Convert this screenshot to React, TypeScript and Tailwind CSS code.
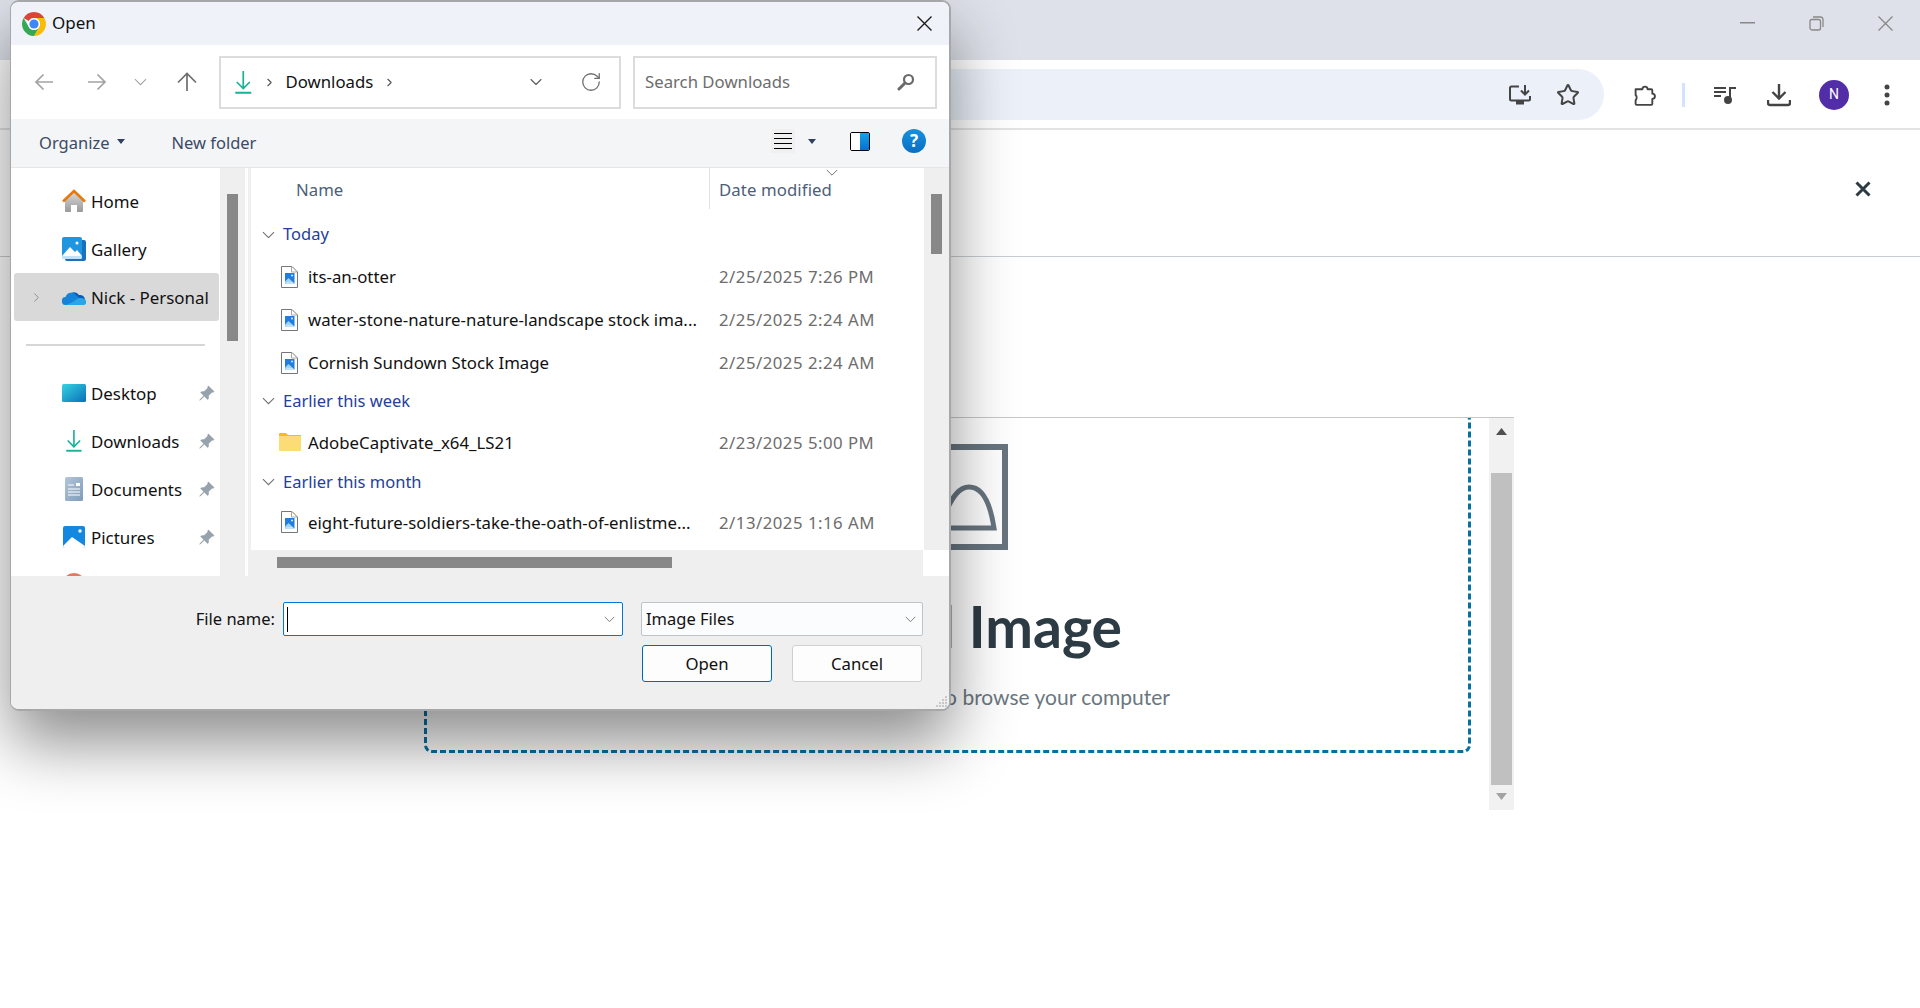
import React from "react";
import { BsPinAngleFill } from "react-icons/bs";
import { RotateCw, Star, ChevronDown, ChevronRight } from "lucide-react";

const ChromeLogo = () => (
  <svg width="24" height="24" viewBox="0 0 24 24">
    <path fill="#db4437" d="M12 0A12 12 0 0 1 22.39 6H12A6 6 0 0 0 6.8 9L1.61 6A12 12 0 0 1 12 0Z" />
    <path fill="#fbbc04" d="M22.39 6A12 12 0 0 1 12 24L17.2 15A6 6 0 0 0 12 6H22.39Z" />
    <path fill="#34a853" d="M1.61 6L6.8 15A6 6 0 0 0 17.2 15L12 24A12 12 0 0 1 1.61 6Z" />
    <circle cx="12" cy="12" r="6" fill="#fff" />
    <circle cx="12" cy="12" r="4.6" fill="#4285f4" />
  </svg>
);

const Arrow = ({ dir, color }: { dir: "l" | "r" | "u"; color: string }) => (
  <svg width="20" height="20" viewBox="0 0 20 20" fill="none" stroke={color} strokeWidth="1.7">
    {dir === "l" && <path d="M19 10H2M9.5 2.5L2 10l7.500 7.500" />}
    {dir === "r" && <path d="M1 10h17M10.500 2.500L18 10l-7.500 7.500" />}
    {dir === "u" && <path d="M10 19V2M1 10.500L10 1.500l9 9" />}
  </svg>
);

const DownloadGreen = ({ h = 23 }: { h?: number }) => (
  <svg width={h * 0.72} height={h} viewBox="0 0 16 23" fill="none" stroke="#17b297" strokeWidth="1.7">
    <path d="M8 0v17M1.500 11L8 17.500 14.500 11" />
    <path d="M0 21.700h16" strokeWidth="2" />
  </svg>
);

const Home = () => (
  <svg width="24" height="24" viewBox="0 0 24 24">
    <defs>
      <linearGradient id="hg" x1="0" y1="0" x2="0" y2="1">
        <stop offset="0" stopColor="#d8d8d8" />
        <stop offset="1" stopColor="#9a9a9a" />
      </linearGradient>
    </defs>
    <path fill="url(#hg)" d="M3 11l9-8 9 8v11a1 1 0 0 1-1 1h-5v-7H9v7H4a1 1 0 0 1-1-1z" />
    <path fill="none" stroke="#e8780c" strokeWidth="2.600" d="M1 12.500L12 2l11 10.500" />
  </svg>
);

const Gallery = () => (
  <svg width="24" height="24" viewBox="0 0 24 24">
    <rect x="3" y="3" width="21" height="21" rx="2" fill="#1a6fc0" />
    <rect x="0" y="0" width="20" height="22" rx="2" fill="#2196e0" />
    <path fill="#fff" d="M0 19l8-9 5 5 2-2 5 6v1a2 2 0 0 1-2 2H2a2 2 0 0 1-2-2z" />
    <path fill="#bfe3fa" d="M0 19h20v1a2 2 0 0 1-2 2H2a2 2 0 0 1-2-2z" />
    <circle cx="15" cy="6" r="1.500" fill="#fff" />
  </svg>
);

const Cloud = () => (
  <svg width="24" height="16" viewBox="0 0 24 16">
    <path fill="#0b5cb5" d="M6 9a6 6 0 0 1 11-3 5 5 0 0 1 6 5z" />
    <path fill="#1583d8" d="M4 16a4 4 0 0 1-.5-8A6 6 0 0 1 14 6l5 5-6 5z" />
    <path fill="#2aa5ea" d="M4 16h17a3 3 0 0 0 2-5.500c-2-2-6-2-8-.5l-4 3z" />
  </svg>
);

const Desktop = () => (
  <svg width="24" height="18" viewBox="0 0 24 18">
    <defs>
      <linearGradient id="dg" x1="0" y1="0" x2="1" y2="1">
        <stop offset="0" stopColor="#35d4e0" />
        <stop offset="1" stopColor="#0a6fb8" />
      </linearGradient>
    </defs>
    <rect width="24" height="18" rx="1.500" fill="url(#dg)" />
  </svg>
);

const Documents = () => (
  <svg width="18" height="24" viewBox="0 0 18 24">
    <defs>
      <linearGradient id="docg" x1="0" y1="0" x2="1" y2="1">
        <stop offset="0" stopColor="#b3c6da" />
        <stop offset="1" stopColor="#7f9cb9" />
      </linearGradient>
    </defs>
    <rect width="18" height="24" rx="1.500" fill="url(#docg)" />
    <path d="M3 8h6M3 12h12M3 15h12M3 18h12" stroke="#fff" strokeWidth="1" />
    <rect x="11" y="6" width="4" height="3" fill="#fff" />
  </svg>
);

const Pictures = () => (
  <svg width="22" height="22" viewBox="0 0 22 22">
    <rect width="22" height="22" rx="2" fill="#1488e0" />
    <path fill="#fff" d="M0 20l9-9 13 9v0a2 2 0 0 1-2 2H2a2 2 0 0 1-2-2z" />
    <circle cx="17" cy="5" r="1.700" fill="#fff" />
  </svg>
);

const Music = () => (
  <svg width="24" height="24" viewBox="0 0 24 24">
    <circle cx="12" cy="12" r="12" fill="#e8765a" />
  </svg>
);

const FileIcon = () => (
  <svg width="17" height="22" viewBox="0 0 17 22" fill="none">
    <path d="M.5.500h10.500l5.500 5.500V21.500H.5z" fill="#fff" stroke="#73777c" strokeWidth="1" />
    <path d="M10.500.500v5.500h6" stroke="#a5a8ab" strokeWidth="1" />
    <rect x="4" y="7" width="9.500" height="10.500" fill="#1f7de0" />
    <path d="M4 17.500v-2l3.500-3.500 6 5.500z" fill="#9fd4f8" />
    <path d="M4 17.500l2-1h5.500l2 1z" fill="#e8f5fe" />
    <circle cx="11" cy="9.500" r="1" fill="#dff1fd" />
  </svg>
);

const FolderIcon = () => (
  <svg width="22" height="18" viewBox="0 0 22 18">
    <path d="M0 1a1 1 0 0 1 1-1h6l2 2h13v3H0z" fill="#f6b72b" />
    <path d="M0 3h22v14a1 1 0 0 1-1 1H1a1 1 0 0 1-1-1z" fill="#fbdc75" />
  </svg>
);

const Chev = ({ w = 14, color = "#6a6a6a" }: { w?: number; color?: string }) => (
  <svg width={w} height={w * 0.6} viewBox="0 0 14 8" fill="none" stroke={color} strokeWidth="1.100">
    <path d="M1 1l6 6 6-6" />
  </svg>
);

const Caret = ({ color = "#2f4060" }: { color?: string }) => (
  <svg width="8" height="5" viewBox="0 0 8 5" className="shrink-0">
    <path d="M0 0h8L4 5z" fill={color} />
  </svg>
);

function NavItem({ icon, label, pin, selected, arrow }: { icon: React.ReactNode; label?: string; pin?: boolean; selected?: boolean; arrow?: boolean }) {
  return (
    <div className={`h-[48px] ml-[3px] mr-[1px] flex items-center rounded-[3px] relative ${selected ? "bg-[#d9d9d9]" : ""}`}>
      <div className="w-[48px] flex justify-center items-center shrink-0">
        {arrow && <ChevronRight size={15} color="#8a8a8a" strokeWidth={1.500} className="ml-[-4px]" />}
      </div>
      <div className="w-[24px] h-[24px] flex items-center justify-center shrink-0">{icon}</div>
      {label && <span className="ml-[5px] pt-[1px] text-[16.900px] text-[#111]">{label}</span>}
      {pin && <BsPinAngleFill size={17} color="#98a2ab" className="absolute right-[4px]" />}
    </div>
  );
}

const Group = ({ label, h }: { label: string; h: string }) => (
  <div className={`flex items-center ${h}`}>
    <div className="w-[32px] flex justify-end pr-[8px]">
      <Chev w={13} color="#6f6f6f" />
    </div>
    <span className="text-[16.500px] text-[#24409c]">{label}</span>
  </div>
);

const Row = ({ name, date, h, folder }: { name: string; date: string; h: string; folder?: boolean }) => (
  <div className={`flex items-center ${h}`}>
    <div className={`w-[57px] flex justify-end ${folder ? "pr-[7px]" : "pr-[10px]"}`}>{folder ? <FolderIcon /> : <FileIcon />}</div>
    <span className="w-[411px] pt-[1px] text-[16.800px] tracking-[0.02px] text-[#111] whitespace-nowrap">{name}</span>
    <span className="pt-[1px] text-[16.750px] tracking-[0.5px] text-[#6d6d6d] whitespace-nowrap">{date}</span>
  </div>
);

function FileDialog() {
  return (
    <div className="absolute left-[10px] top-0 w-[941px] h-[711px] border-t-2 border-b-2 border-r-2 border-l border-[#a6a7a9] rounded-[9px] bg-white overflow-hidden flex flex-col shadow-[0_32px_64px_rgba(0,0,0,0.45)] font-['Noto_Sans',sans-serif] z-10">
      {/* title */}
      <div className="h-[43px] bg-[#eff3f9] flex items-center pl-[11px] pr-[17px] shrink-0">
        <ChromeLogo />
        <span className="ml-[6px] mb-[1px] text-[17px] text-[#111]">Open</span>
        <svg className="ml-auto" width="15" height="15" viewBox="0 0 15 15" stroke="#1c1c1c" strokeWidth="1.400">
          <path d="M.5.500l14 14M14.500.500l-14 14" />
        </svg>
      </div>
      {/* nav bar */}
      <div className="h-[74px] flex items-center shrink-0 pl-[23px] pr-[12px]">
        <Arrow dir="l" color="#a2a2a2" />
        <div className="ml-[33px]"><Arrow dir="r" color="#a2a2a2" /></div>
        <div className="ml-[27px]"><Chev w={13} color="#a2a2a2" /></div>
        <div className="ml-[30px]"><Arrow dir="u" color="#6e6e6e" /></div>
        <div className="ml-[22px] w-[402px] h-[53px] border-2 border-[#dcdcdc] flex items-center pl-[14px] pr-[17px]">
          <DownloadGreen />
          <ChevronRight size={13} color="#555" strokeWidth={2} className="ml-[11px]" />
          <span className="ml-[10px] text-[16.750px] text-[#111]">Downloads</span>
          <ChevronRight size={13} color="#555" strokeWidth={2} className="ml-[10px]" />
          <ChevronDown size={20} color="#5c5c5c" strokeWidth={1.300} className="ml-[130px]" />
          <RotateCw size={22} color="#6e6e6e" strokeWidth={1.400} className="ml-auto" />
        </div>
        <div className="ml-[12px] w-[304px] h-[53px] border-2 border-[#dcdcdc] flex items-center pl-[10px] pr-[20px]">
          <span className="text-[16.750px] text-[#6d6d6d]">Search Downloads</span>
          <svg className="ml-auto" width="18" height="18" viewBox="0 0 18 18" fill="none" stroke="#6a6a6a">
            <circle cx="11.500" cy="6.500" r="4.500" strokeWidth="2.200" />
            <path d="M8 10l-6 6" strokeWidth="3" strokeLinecap="round" />
          </svg>
        </div>
      </div>
      {/* toolbar */}
      <div className="h-[49px] bg-[#f4f5f6] border-b border-[#e6e6e6] flex items-center shrink-0 pl-[28px] pr-[23px]">
        <span className="pt-[1px] text-[16.500px] text-[#3b4a66]">Organize</span>
        <div className="ml-[8px] mb-[4px]"><Caret /></div>
        <span className="ml-[46px] pt-[1px] text-[16.500px] text-[#3b4a66]">New folder</span>
        <div className="ml-auto w-[24px] h-[24px] bg-[#f0f0f0] flex flex-col justify-center gap-[4px] px-[3px] mb-[4px]">
          <div className="h-px bg-black" /><div className="h-px bg-black" /><div className="h-px bg-black" /><div className="h-px bg-black" />
        </div>
        <div className="ml-[13px] mb-[4px]"><Caret /></div>
        <div className="ml-[34px] w-[20px] h-[19px] border-[1.500px] border-black rounded-[2px] flex mb-[4px] overflow-hidden">
          <div className="w-1/2 bg-white" />
          <div className="w-1/2 bg-gradient-to-b from-[#18a2e8] to-[#0b6fd0]" />
        </div>
        <div className="ml-[32px] w-[24px] h-[24px] rounded-full bg-gradient-to-b from-[#1890de] to-[#0a6fc2] text-white font-bold text-[17px] leading-[24px] text-center mb-[4px]">?</div>
      </div>
      {/* body */}
      <div className="h-[408px] flex shrink-0">
        <div className="w-[209px] overflow-hidden pt-[9px] shrink-0">
          <NavItem icon={<Home />} label="Home" />
          <NavItem icon={<Gallery />} label="Gallery" />
          <NavItem icon={<Cloud />} label="Nick - Personal" selected arrow />
          <div className="h-[48px] flex items-center px-[15px]"><div className="h-[2px] w-full bg-[#d6d6d6]" /></div>
          <NavItem icon={<Desktop />} label="Desktop" pin />
          <NavItem icon={<DownloadGreen h={22} />} label="Downloads" pin />
          <NavItem icon={<Documents />} label="Documents" pin />
          <NavItem icon={<Pictures />} label="Pictures" pin />
          <NavItem icon={<Music />} />
        </div>
        <div className="w-[25px] bg-[#efefef] pt-[26px] pl-[7px] shrink-0">
          <div className="w-[11px] h-[147px] bg-[#888]" />
        </div>
        <div className="w-[3px] shrink-0" />
        <div className="w-[3px] bg-[#efefef] shrink-0" />
        <div className="flex-1 flex flex-col min-w-0">
          <div className="h-[382px] flex shrink-0">
            <div className="flex-1 relative overflow-hidden">
              <div className="h-[46px] relative">
                <div className="h-[41px] flex items-center pl-[45px] pt-[2px] w-[459px] border-r border-[#e3e3e3]">
                  <span className="text-[16.750px] text-[#4c607a]">Name</span>
                </div>
                <span className="absolute left-[468px] top-[9px] text-[16.750px] tracking-[0.1px] text-[#4c607a]">Date modified</span>
                <div className="absolute left-[575px] top-[1px]"><Chev w={12} color="#6f6f6f" /></div>
              </div>
              <Group label="Today" h="h-[41px]" />
              <Row name="its-an-otter" date="2/25/2025 7:26 PM" h="h-[43px]" />
              <Row name="water-stone-nature-nature-landscape stock ima..." date="2/25/2025 2:24 AM" h="h-[43px]" />
              <Row name="Cornish Sundown Stock Image" date="2/25/2025 2:24 AM" h="h-[43px]" />
              <Group label="Earlier this week" h="h-[34px]" />
              <Row name="AdobeCaptivate_x64_LS21" date="2/23/2025 5:00 PM" h="h-[48px]" folder />
              <Group label="Earlier this month" h="h-[32px]" />
              <Row name="eight-future-soldiers-take-the-oath-of-enlistme..." date="2/13/2025 1:16 AM" h="h-[48px]" />
            </div>
            <div className="w-[25px] bg-[#efefef] pt-[26px] pl-[7px] shrink-0">
              <div className="w-[11px] h-[60px] bg-[#888]" />
            </div>
          </div>
          <div className="h-[26px] flex shrink-0">
            <div className="flex-1 bg-[#efefef] pt-[7px] pl-[26px]">
              <div className="w-[395px] h-[11px] bg-[#888]" />
            </div>
            <div className="w-[26px] bg-white" />
          </div>
        </div>
      </div>
      {/* footer */}
      <div className="flex-1 bg-[#efefef] relative flex flex-col items-end pr-[26px] pt-[26px]">
        <div className="flex items-center h-[34px]">
          <span className="pt-[1px] text-[16.500px] text-[#111] mr-[8px]">File name:</span>
          <div className="w-[340px] h-[34px] bg-white border border-[#0078d4] rounded-[2px] flex items-center pl-[3px] pr-[7px]">
            <div className="w-px h-[25px] bg-black" />
            <div className="ml-auto"><Chev w={11} /></div>
          </div>
          <div className="ml-[18px] w-[282px] h-[34px] bg-[#fbfcfe] border border-[#bfc4c9] rounded-[2px] flex items-center pl-[4px] pr-[6px]">
            <span className="pt-[1px] text-[16.500px] text-[#111]">Image Files</span>
            <div className="ml-auto"><Chev w={11} /></div>
          </div>
        </div>
        <div className="flex gap-[20px] mt-[9px] mr-[1px]">
          <div className="w-[130px] h-[37px] pt-[1px] bg-[#fdfdfd] border border-[#0067c0] rounded-[3px] flex items-center justify-center text-[16.750px] text-[#111]">Open</div>
          <div className="w-[130px] h-[37px] pt-[1px] bg-[#fdfdfd] border border-[#d0d0d0] rounded-[3px] flex items-center justify-center text-[16.750px] text-[#111]">Cancel</div>
        </div>
        <svg className="absolute right-[1px] bottom-[1px]" width="12" height="12" viewBox="0 0 12 12" fill="#c8c8c8">
          <rect x="9" y="0" width="2" height="2" /><rect x="6" y="3" width="2" height="2" /><rect x="9" y="3" width="2" height="2" />
          <rect x="3" y="6" width="2" height="2" /><rect x="6" y="6" width="2" height="2" /><rect x="9" y="6" width="2" height="2" />
          <rect x="0" y="9" width="2" height="2" /><rect x="3" y="9" width="2" height="2" /><rect x="6" y="9" width="2" height="2" /><rect x="9" y="9" width="2" height="2" />
        </svg>
      </div>
    </div>
  );
}

function BrowserChrome() {
  return (
    <>
      <div className="h-[60px] bg-[#dee1e9] flex items-center justify-end pr-[27px] pb-[14px]">
        <svg width="15" height="2" viewBox="0 0 15 2"><rect width="15" height="1.500" fill="#888" /></svg>
        <svg className="ml-[54px]" width="15" height="15" viewBox="0 0 15 15" fill="none" stroke="#888" strokeWidth="1.300">
          <rect x="1" y="3.500" width="10.500" height="10.500" rx="2" />
          <path d="M4 1h7.500A2.500 2.500 0 0 1 14 3.500V11" />
        </svg>
        <svg className="ml-[54px]" width="15" height="15" viewBox="0 0 15 15" stroke="#888" strokeWidth="1.300">
          <path d="M.5.500l14 14M14.500.500l-14 14" />
        </svg>
      </div>
      <div className="h-[70px] bg-white border-b-2 border-[#e3e3e3] rounded-tl-[10px] rounded-tr-[10px] flex items-center pt-[1px]">
        <div className="flex-1 h-[51px] bg-[#ebf0f9] rounded-full flex items-center justify-end pr-[24px] ml-[40px]">
          <svg width="24" height="24" viewBox="0 0 24 24" fill="none" stroke="#444" strokeWidth="2">
            <path d="M11 3.500H3.500a1.500 1.500 0 0 0-1.500 1.500v11a1.500 1.500 0 0 0 1.500 1.500h17a1.500 1.500 0 0 0 1.500-1.500v-3" />
            <path d="M17 2v9M13 7.500l4 4 4-4" />
            <rect x="8" y="18" width="8" height="3.500" fill="#444" stroke="none" />
          </svg>
          <Star size={24} color="#444" strokeWidth={2} className="ml-[24px]" />
        </div>
        <svg className="ml-[29px]" width="24" height="24" viewBox="1 0 20 23" fill="none" stroke="#444" strokeWidth="1.800" strokeLinejoin="round">
          <path d="M2 6h6.500a2.500 2.500 0 0 1 5 0H17a1 1 0 0 1 1 1v3.200a2.500 2.500 0 0 1 0 5V20a1 1 0 0 1-1 1H3a1 1 0 0 1-1-1v-3.500a3 3 0 0 0 1-2.500 3 3 0 0 0-1-2.500z" />
        </svg>
        <div className="ml-[25px] w-[3px] h-[24px] bg-[#d3e3fd]" />
        <svg className="ml-[28px]" width="24" height="24" viewBox="0 0 24 24" fill="none" stroke="#444" strokeWidth="2">
          <path d="M1 5h12M1 9h12M1 13h7" />
          <circle cx="15" cy="17" r="3" fill="#444" />
          <path d="M17 17V5h6" />
        </svg>
        <svg className="ml-[30px]" width="24" height="24" viewBox="0 0 24 24" fill="none" stroke="#444" strokeWidth="2.400">
          <path d="M12 1v14M5.500 9l6.500 6.500L18.500 9" />
          <path d="M1 17v3a2 2 0 0 0 2 2h18a2 2 0 0 0 2-2v-3" />
        </svg>
        <div className="ml-[28px] w-[30px] h-[30px] rounded-full bg-[#512da8] text-white text-[14px] flex items-center justify-center font-['Roboto',sans-serif]">N</div>
        <svg className="ml-[35px] mr-[30px]" width="6" height="22" viewBox="0 0 6 22" fill="#444">
          <circle cx="3" cy="3" r="2.500" /><circle cx="3" cy="11" r="2.500" /><circle cx="3" cy="19" r="2.500" />
        </svg>
      </div>
    </>
  );
}

export default function App() {
  return (
    <div className="relative w-[1920px] h-[1008px] overflow-hidden bg-white font-['Lato',sans-serif]">
      <BrowserChrome />
      <div className="h-[127px] border-b border-[#c7cdd1] flex items-center justify-end pr-[49px] pb-[9px]">
        <svg width="16" height="16" viewBox="0 0 16 16" stroke="#2d3b45" strokeWidth="3">
          <path d="M1.500 1.500l13 13M14.500 1.500l-13 13" />
        </svg>
      </div>
      <div className="mt-[160px] ml-[410px] w-[1104px] h-[393px] border-t border-[#c7c7c7] flex">
        <div className="flex-1 min-w-0 overflow-hidden pl-[14px] pr-[18px]">
          <div className="-mt-[6px] h-[341px] border-[3px] border-dashed border-[#0770a3] rounded-[8px] flex flex-col items-center">
            <svg className="mt-[29px] shrink-0" width="120" height="106" viewBox="0 0 120 106" fill="none" stroke="#68757f" strokeWidth="6">
              <rect x="3" y="3" width="114" height="100" />
              <path d="M12 84h94c-3-20-10-41-25-41-10 0-16 10-22 22-4-7-9-14-17-14-9 0-17 15-30 33z" strokeWidth="5" />
              <circle cx="36" cy="28" r="8" strokeWidth="5" />
            </svg>
            <div className="mt-[42px] text-[57px] font-bold text-[#2d3b45] leading-[68px] whitespace-nowrap">Upload Image</div>
            <div className="mt-[22px] text-[21px] text-[#6b7780] leading-[30px] whitespace-nowrap">Drag and drop, or click to browse your computer</div>
          </div>
        </div>
        <div className="w-[25px] bg-[#f1f1f1] flex flex-col items-center shrink-0 relative">
          <svg className="mt-[10px]" width="11" height="7" viewBox="0 0 11 7"><path d="M0 7L5.500 0 11 7z" fill="#505050" /></svg>
          <div className="mt-[38px] w-[21px] h-[312px] bg-[#c0c0c0]" />
          <svg className="mt-[8px]" width="11" height="7" viewBox="0 0 11 7"><path d="M0 0L5.500 7 11 0z" fill="#a3a3a3" /></svg>
        </div>
      </div>
      <FileDialog />
    </div>
  );
}
